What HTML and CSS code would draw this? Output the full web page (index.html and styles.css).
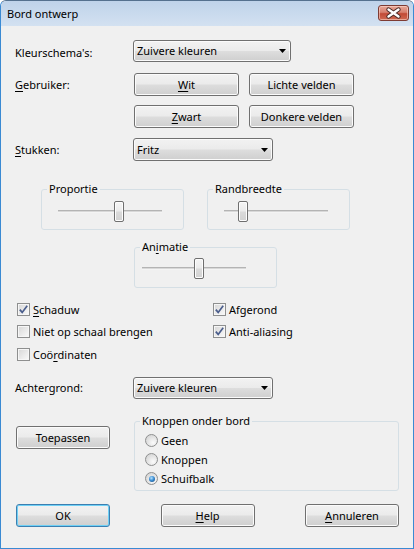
FILE: index.html
```html
<!DOCTYPE html>
<html>
<head>
<meta charset="utf-8">
<link rel="stylesheet" href="styles.css">
</head>
<body>
<div class="window">
  <div class="titlebar">
    <span class="title">Bord ontwerp</span>
    <span class="close"><svg width="31" height="16" viewBox="0 0 31 16"><path d="M10.5 4.5 L20.5 11.5 M20.5 4.5 L10.5 11.5" stroke="#4a2a26" stroke-width="4.4" stroke-linecap="round"/><path d="M10.5 4.5 L20.5 11.5 M20.5 4.5 L10.5 11.5" stroke="#ffffff" stroke-width="2.4" stroke-linecap="round"/></svg></span>
  </div>
  <div class="client">
    <div class="row r1">
      <span class="lbl lbl-low">Kleurschema's:</span>
      <div class="combo w158"><span>Zuivere kleuren</span><svg class="arrow" width="7" height="4" viewBox="0 0 7 4"><path d="M0 0H7L3.5 4Z" fill="#000"/></svg></div>
    </div>
    <div class="row r2">
      <span class="lbl lbl-wide"><u>G</u>ebruiker:</span>
      <button class="btn b105"><u>W</u>it</button>
      <button class="btn b105 gap10">Lichte velden</button>
    </div>
    <div class="row r3">
      <span class="lbl lbl-wide"></span>
      <button class="btn b105"><u>Z</u>wart</button>
      <button class="btn b105 gap10">Donkere velden</button>
    </div>
    <div class="row r4">
      <span class="lbl"><u>S</u>tukken:</span>
      <div class="combo w140 h23"><span>Fritz</span><svg class="arrow" width="7" height="4" viewBox="0 0 7 4"><path d="M0 0H7L3.5 4Z" fill="#000"/></svg></div>
    </div>
    <div class="sliders">
      <fieldset class="group g143">
        <legend>Proportie</legend>
        <div class="slider s1"><div class="track"></div><div class="thumb" style="left:56px"></div></div>
      </fieldset>
      <fieldset class="group g143">
        <legend>Randbreedte</legend>
        <div class="slider s1"><div class="track"></div><div class="thumb" style="left:14px"></div></div>
      </fieldset>
    </div>
    <fieldset class="group g143 anim">
      <legend>An<u>i</u>matie</legend>
      <div class="slider s2"><div class="track"></div><div class="thumb" style="left:52px"></div></div>
    </fieldset>
    <div class="checks">
      <label class="check"><span class="cb"><svg width="11" height="11" viewBox="0 0 11 11"><path d="M1.8 5.6 L4.2 8.4 L9.2 1.8" fill="none" stroke="#4a5d8c" stroke-width="1.7"/></svg></span><span><u>S</u>chaduw</span></label>
      <label class="check"><span class="cb"><svg width="11" height="11" viewBox="0 0 11 11"><path d="M1.8 5.6 L4.2 8.4 L9.2 1.8" fill="none" stroke="#4a5d8c" stroke-width="1.7"/></svg></span><span>Afgerond</span></label>
      <label class="check"><span class="cb"></span><span>Niet op schaal brengen</span></label>
      <label class="check"><span class="cb"><svg width="11" height="11" viewBox="0 0 11 11"><path d="M1.8 5.6 L4.2 8.4 L9.2 1.8" fill="none" stroke="#4a5d8c" stroke-width="1.7"/></svg></span><span>Anti-aliasing</span></label>
      <label class="check"><span class="cb"></span><span>Coö<u>r</u>dinaten</span></label>
    </div>
    <div class="row r5">
      <span class="lbl">Achtergrond:</span>
      <div class="combo w140"><span>Zuivere kleuren</span><svg class="arrow" width="7" height="4" viewBox="0 0 7 4"><path d="M0 0H7L3.5 4Z" fill="#000"/></svg></div>
    </div>
    <div class="bottom">
      <button class="btn b94 apply">Toepassen</button>
      <fieldset class="group knoppen">
        <legend>Knoppen onder bord</legend>
        <div class="radios">
          <label class="radio"><span class="rb"></span><span>Geen</span></label>
          <label class="radio"><span class="rb"></span><span>Knoppen</span></label>
          <label class="radio"><span class="rb on"><span class="dot"></span></span><span>Schuifbalk</span></label>
        </div>
      </fieldset>
    </div>
    <div class="actions">
      <button class="btn b94 default">OK</button>
      <button class="btn b94"><u>H</u>elp</button>
      <button class="btn b94"><u>A</u>nnuleren</button>
    </div>
  </div>
</div>
</body>
</html>
```
FILE: styles.css
```css
html, body {
  margin: 0;
  padding: 0;
  background: #ffffff;
}

.window {
  width: 414px;
  height: 549px;
  box-sizing: border-box;
  border: 1px solid #3a8ad3;
  border-top-color: #55718f;
  border-radius: 6px 6px 0 0;
  background: #f0f0f0;
  overflow: hidden;
  font: 11px/14px "Noto Sans", "DejaVu Sans", sans-serif;
  color: #000;
}

.titlebar {
  height: 25px;
  background: linear-gradient(#bfd3ea, #d3e1f1);
  display: flex;
  justify-content: space-between;
  align-items: center;
  padding: 0 4px 0 6px;
}

.title {
  color: #000;
  font-size: 11px;
}

.close {
  align-self: flex-start;
  margin-top: 4px;
  width: 31px;
  height: 16px;
  box-sizing: border-box;
  border: 1px solid #7e3b33;
  border-radius: 3px;
  background: linear-gradient(#e8a899 0%, #d7806f 45%, #c24a36 55%, #d06a52 100%);
  box-shadow: inset 0 0 0 1px rgba(255, 220, 210, 0.55);
  display: flex;
}

.close svg {
  margin: -1px;
}

.client {
  padding: 14px 0 0 14px;
}

.row {
  display: flex;
  align-items: center;
}

.lbl {
  width: 118px;
  flex: none;
}

.lbl-wide {
  width: 119px;
}

.lbl-low {
  margin-top: 3px;
}

.r2 { margin-top: 11px; }
.r3 { margin-top: 9px; }
.r4 { margin-top: 10px; }
.r5 { margin-top: 16px; }

u {
  text-decoration-thickness: 1px;
  text-underline-offset: 2px;
}

.btn,
.combo {
  font: inherit;
  color: #000;
  box-sizing: border-box;
  border: 1px solid #707070;
  border-radius: 3px;
  background: linear-gradient(#f2f2f2 0%, #ebebeb 48%, #dddddd 52%, #cfcfcf 100%);
  box-shadow: inset 0 0 0 1px #fbfbfb;
  padding: 0;
  margin: 0;
}

.btn {
  height: 23px;
  display: flex;
  align-items: center;
  justify-content: center;
}

.b105 { width: 105px; }
.b94 { width: 94px; }
.gap10 { margin-left: 10px; }

.combo {
  height: 22px;
  display: flex;
  align-items: center;
  justify-content: space-between;
  padding: 0 4px 0 3px;
}

.h23 { height: 23px; }
.w158 { width: 158px; }
.w140 { width: 140px; }

.arrow {
  flex: none;
}

.sliders {
  display: flex;
  gap: 23px;
  margin: 21px 0 0 26px;
}

fieldset.group {
  margin: 0;
  padding: 0;
  border: 1px solid #d5dfe5;
  border-radius: 3px;
  min-width: 0;
  box-sizing: border-box;
}

fieldset.group legend {
  margin-left: 5px;
  padding: 0 2px;
  line-height: 14px;
  height: 14px;
}

.g143 { width: 143px; }

fieldset.anim {
  margin: 10px 0 0 119px;
}

.slider {
  position: relative;
  width: 104px;
  height: 21px;
}

.s1 { margin: 5px 0 7px 16px; }
.s2 { margin: 4px 0 8px 7px; }

.track {
  position: absolute;
  left: 0;
  right: 0;
  top: 9px;
  height: 3px;
  box-sizing: border-box;
  border-top: 1px solid #b4b4b4;
  border-bottom: 1px solid #f4f4f4;
  background: #d8d8d8;
}

.thumb {
  position: absolute;
  top: 0;
  width: 10px;
  height: 21px;
  box-sizing: border-box;
  border: 1px solid #6f6f6f;
  border-radius: 2px;
  background: linear-gradient(#f5f5f5 0%, #ececec 45%, #dadada 55%, #d2d2d2 100%);
  box-shadow: inset 0 0 0 1px #fdfdfd;
}

.checks {
  display: grid;
  grid-template-columns: 196px auto;
  grid-template-rows: 22px 23px 13px;
  align-items: start;
  margin: 15px 0 0 2px;
}

.check {
  display: flex;
  align-items: center;
  gap: 3px;
  height: 13px;
}

.cb {
  width: 13px;
  height: 13px;
  flex: none;
  box-sizing: border-box;
  border: 1px solid #8e8f8f;
  background: linear-gradient(135deg, #d6d6d6 0%, #ececec 60%, #fafafa 100%);
  box-shadow: inset 0 0 0 1px #f6f6f6;
  display: flex;
}

.bottom {
  display: flex;
  align-items: flex-start;
  margin-top: 15px;
}

.apply {
  margin: 12px 0 0 1px;
}

fieldset.knoppen {
  width: 265px;
  margin-left: 24px;
}

.radios {
  display: flex;
  flex-direction: column;
  gap: 6px;
  margin: 6px 0 5px 10px;
}

.radio {
  display: flex;
  align-items: center;
  gap: 3px;
  height: 13px;
}

.rb {
  width: 13px;
  height: 13px;
  flex: none;
  box-sizing: border-box;
  border: 1px solid #8e8f8f;
  border-radius: 50%;
  background: radial-gradient(circle at 65% 70%, #fbfbfb 0%, #e6e6e6 45%, #cdcdcd 100%);
  display: flex;
  align-items: center;
  justify-content: center;
}

.dot {
  width: 6px;
  height: 6px;
  border-radius: 50%;
  background: radial-gradient(circle at 40% 35%, #b8e4ff 0%, #3d8fd4 45%, #0c3e72 100%);
}

.actions {
  display: flex;
  justify-content: space-between;
  width: 383px;
  margin: 13px 0 0 1px;
}

.default {
  border-color: #3c7fb1;
  box-shadow: inset 0 0 0 1px #6fd0f5;
}
```
